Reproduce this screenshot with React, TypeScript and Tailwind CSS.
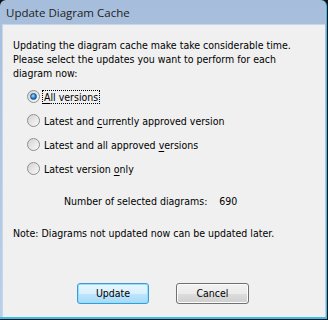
import { useState } from "react";

const options = [
  { pre: "", key: "A", post: "ll versions" },
  { pre: "Latest and ", key: "c", post: "urrently approved version" },
  { pre: "Latest and all approved ", key: "v", post: "ersions" },
  { pre: "Latest version ", key: "o", post: "nly" },
];

function Radio({ checked }: { checked: boolean }) {
  return (
    <span className="relative flex h-[13px] w-[13px] shrink-0 items-center justify-center rounded-full border border-[#8e8f8f] bg-gradient-to-br from-[#d3d3d3] to-[#fafafa]">
      {checked && (
        <span className="h-[7px] w-[7px] rounded-full border border-[#1a4f8f] bg-[radial-gradient(circle_at_40%_35%,#9fdcff,#1c78c6_60%,#0d4c92)]" />
      )}
    </span>
  );
}

export default function App() {
  const [sel, setSel] = useState(0);
  return (
    <div className="h-[320px] w-[328px] overflow-hidden bg-[#101418] font-['DejaVu_Sans_Condensed','Liberation_Sans',sans-serif] text-[10.5px] text-black">
      <div className="flex h-[319px] w-[327px] flex-col rounded-t-[6px] border-b-2 border-r border-[#3dbbe0] bg-gradient-to-b from-[#a6bedb] to-[#b9d0ea]">
        <div className="flex h-[24px] items-center pl-[6px] pt-[1px] font-['Open_Sans',sans-serif] text-[11.5px] text-[#1e1e1e]">
          Update Diagram Cache
        </div>
        <div className="ml-[2px] mr-[1px] flex flex-1 flex-col border-l border-t border-[#c7d6e8] bg-[#f0f0f0] pl-[10px] pt-[13px]">
          <p className="leading-[14px]">
            Updating the diagram cache make take considerable time.
            <br />
            Please select the updates you want to perform for each
            <br />
            diagram now:
          </p>
          <div className="mt-[10px] flex flex-col gap-[11px] pl-[14px]">
            {options.map((o, i) => (
              <label
                key={i}
                className="flex h-[13px] cursor-default items-center gap-[2px]"
                onClick={() => setSel(i)}
              >
                <Radio checked={sel === i} />
                <span
                  className={
                    i === sel
                      ? "border border-dotted border-black px-[1px] leading-[12px]"
                      : "px-[2px] leading-[14px]"
                  }
                >
                  {o.pre}
                  <span className="underline underline-offset-[2px]">{o.key}</span>
                  {o.post}
                </span>
              </label>
            ))}
          </div>
          <div className="mt-[19px] flex pl-[51px] leading-[14px]">
            <span>Number of selected diagrams:</span>
            <span className="ml-[12px]">690</span>
          </div>
          <p className="mt-[18px] leading-[14px]">Note: Diagrams not updated now can be updated later.</p>
          <div className="mt-[43px] flex gap-[27px] pl-[64px]">
            <button className="h-[21px] w-[72px] rounded-[3px] border border-[#3c9bd6] bg-[linear-gradient(#eaf6fd_0%,#d9f0fc_50%,#bee6fd_50%,#a7d9f5_100%)] shadow-[inset_0_0_0_1px_#8fe1fc]">
              Update
            </button>
            <button className="h-[21px] w-[73px] rounded-[3px] border border-[#707070] bg-[linear-gradient(#f2f2f2_0%,#ebebeb_50%,#dddddd_50%,#cfcfcf_100%)] shadow-[inset_0_0_0_1px_#fcfcfc]">
              Cancel
            </button>
          </div>
        </div>
      </div>
    </div>
  );
}
